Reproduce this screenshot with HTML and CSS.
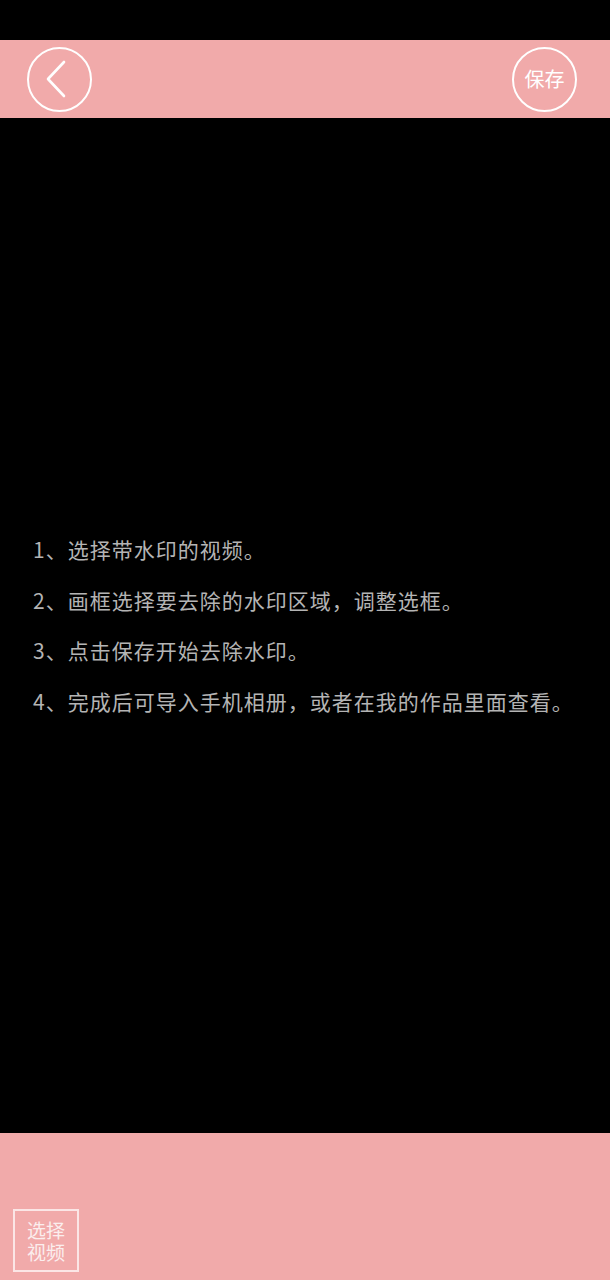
FILE: index.html
```html
<!DOCTYPE html>
<html lang="zh">
<head>
<meta charset="utf-8">
<link rel="stylesheet" href="styles.css">
</head>
<body>
<div class="page">
  <div class="statusbar"></div>
  <header class="topbar">
    <div class="circle-btn back">
      <svg width="22" height="38" viewBox="0 0 22 38"><polyline points="19,2 3,19 19,36" fill="none" stroke="#fff" stroke-width="2.6" stroke-linecap="round" stroke-linejoin="round"/></svg>
    </div>
    <div class="circle-btn save">保存</div>
  </header>
  <main class="content">
    <ol class="tips">
      <li>1、选择带水印的视频。</li>
      <li>2、画框选择要去除的水印区域，调整选框。</li>
      <li>3、点击保存开始去除水印。</li>
      <li>4、完成后可导入手机相册，或者在我的作品里面查看。</li>
    </ol>
  </main>
  <footer class="bottombar">
    <div class="pick-btn"><span>选择</span><span>视频</span></div>
  </footer>
</div>
</body>
</html>
```
FILE: styles.css
```css
html, body {
  margin: 0;
  padding: 0;
  background: #000;
}
body {
  font-family: "Noto Sans CJK SC", "Noto Sans", sans-serif;
}
.page {
  width: 610px;
  height: 1280px;
  display: flex;
  flex-direction: column;
  background: #000;
}
.statusbar {
  height: 40px;
  flex: none;
}
.topbar {
  height: 78px;
  flex: none;
  background: #f1aaaa;
  display: flex;
  align-items: center;
  justify-content: space-between;
  padding: 0 33px 0 27px;
  box-sizing: border-box;
}
.circle-btn {
  width: 65px;
  height: 65px;
  box-sizing: border-box;
  border: 2px solid #fff;
  border-radius: 50%;
  display: flex;
  align-items: center;
  justify-content: center;
  color: #fff;
}
.back svg {
  margin-left: -8px;
}
.save {
  font-size: 20px;
  line-height: 1;
}
.content {
  flex: 1;
  display: flex;
  flex-direction: column;
  justify-content: flex-start;
}
.tips {
  list-style: none;
  margin: 406px 0 0 0;
  padding: 0 0 0 33px;
  color: #b4b4b4;
  font-size: 21px;
  letter-spacing: 1px;
  line-height: 50.7px;
}
.tips li {
  white-space: nowrap;
}
.bottombar {
  height: 147px;
  flex: none;
  background: #f1aaaa;
  display: flex;
  align-items: flex-end;
  padding: 0 0 8px 13px;
  box-sizing: border-box;
}
.pick-btn {
  width: 66px;
  height: 63px;
  box-sizing: border-box;
  border: 2px solid #fbe6e6;
  color: #fbeeee;
  font-size: 19px;
  line-height: 22px;
  display: flex;
  flex-direction: column;
  align-items: center;
  justify-content: center;
  text-align: center;
}
.pick-btn span {
  display: block;
  height: 22px;
}
```
